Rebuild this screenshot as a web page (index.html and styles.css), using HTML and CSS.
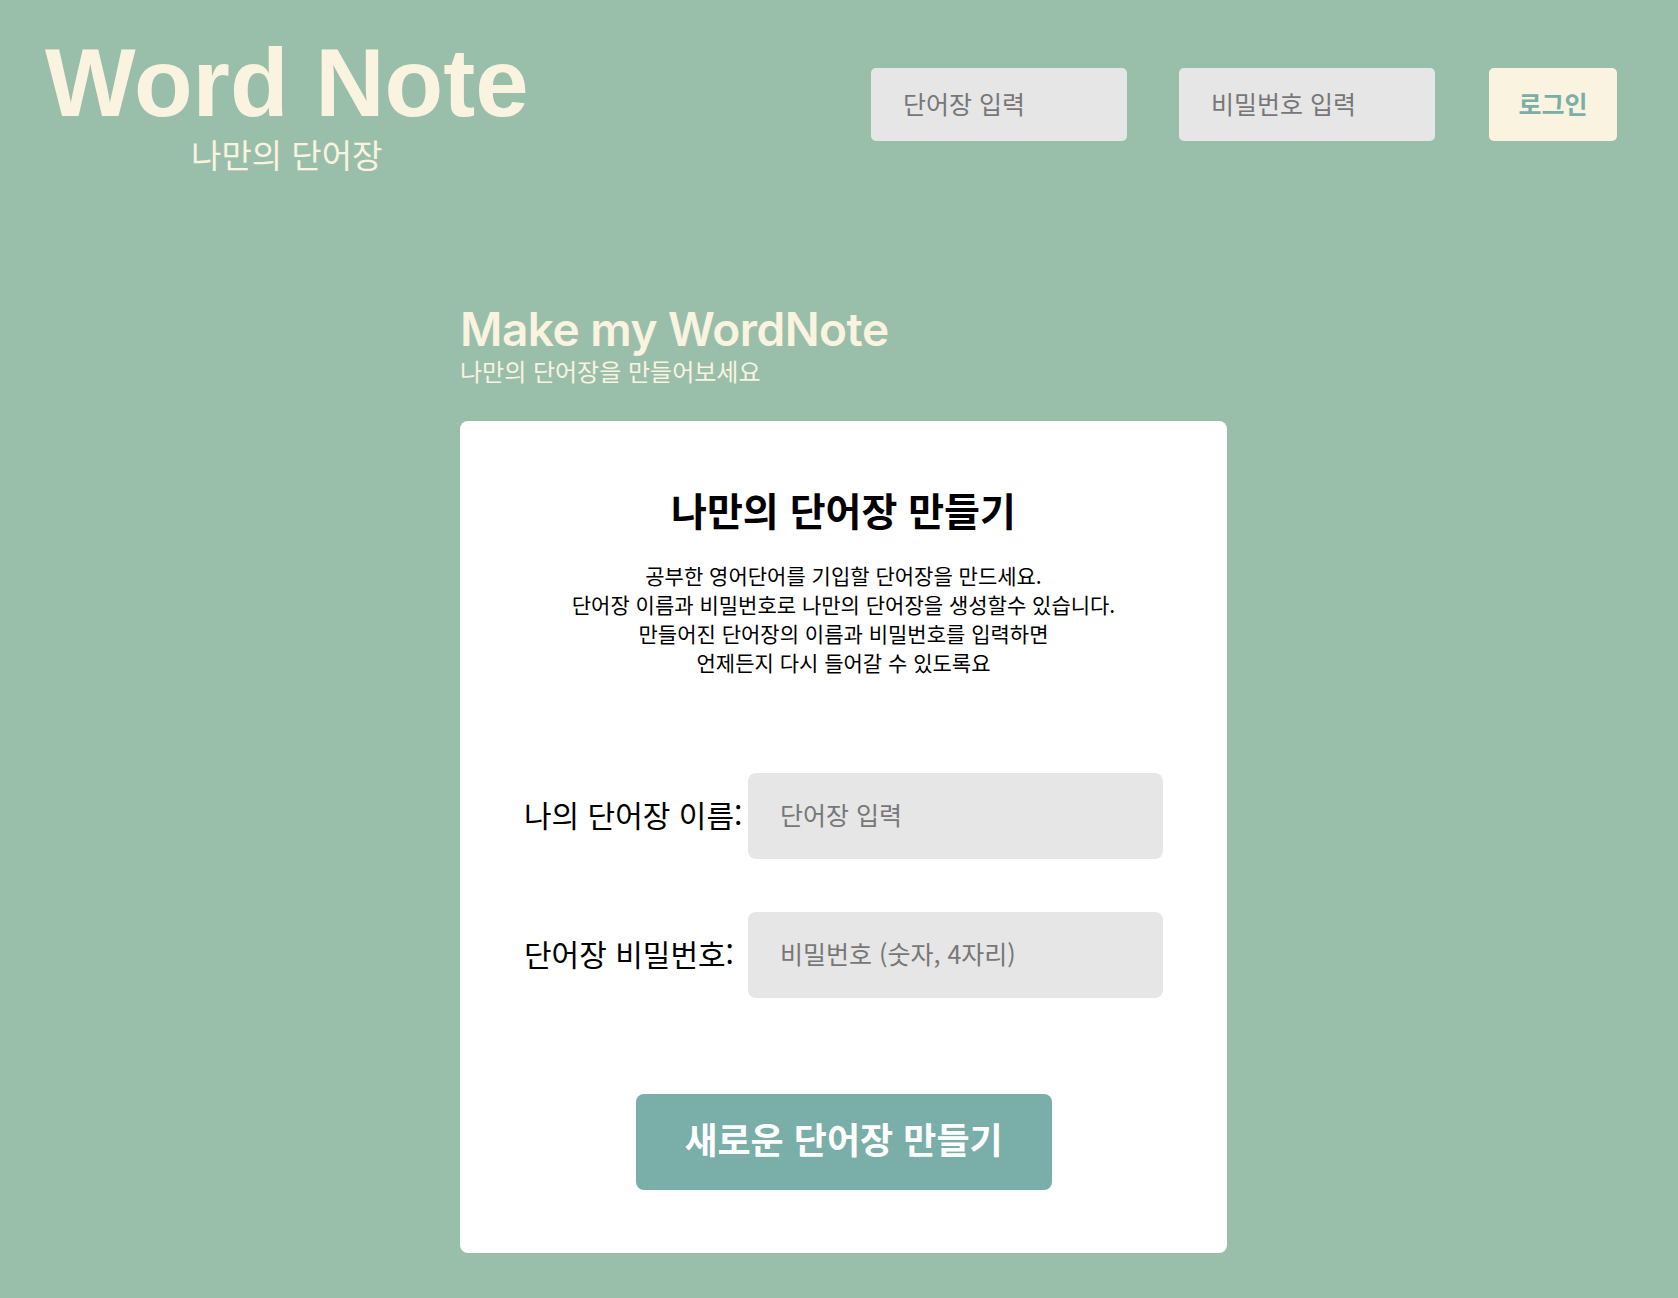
FILE: index.html
```html
<!DOCTYPE html>
<html lang="ko">
<head>
<meta charset="utf-8">
<title>Word Note</title>
<link rel="stylesheet" href="styles.css">
</head>
<body>
<header class="header">
  <div class="logo">
    <h1 class="logo-title">Word Note</h1>
    <p class="logo-sub">나만의 단어장</p>
  </div>
  <form class="login">
    <input class="login-input" type="text" placeholder="단어장 입력">
    <input class="login-input" type="password" placeholder="비밀번호 입력">
    <button class="login-btn" type="button">로그인</button>
  </form>
</header>
<main class="main">
  <section class="make">
    <h2 class="make-title">Make my WordNote</h2>
    <p class="make-sub">나만의 단어장을 만들어보세요</p>
    <div class="card">
      <h3 class="card-title">나만의 단어장 만들기</h3>
      <p class="card-desc">공부한 영어단어를 기입할 단어장을 만드세요.<br>단어장 이름과 비밀번호로 나만의 단어장을 생성할수 있습니다.<br>만들어진 단어장의 이름과 비밀번호를 입력하면<br>언제든지 다시 들어갈 수 있도록요</p>
      <div class="form">
        <label class="form-label" for="name">나의 단어장 이름:</label>
        <input class="form-input" id="name" type="text" placeholder="단어장 입력">
        <label class="form-label" for="pw">단어장 비밀번호:</label>
        <input class="form-input" id="pw" type="password" placeholder="비밀번호 (숫자, 4자리)">
      </div>
      <div class="actions">
        <button class="create-btn" type="button">새로운 단어장 만들기</button>
      </div>
    </div>
  </section>
</main>
</body>
</html>
```
FILE: styles.css
```css
* { box-sizing: border-box; }
html, body { margin: 0; padding: 0; }
body {
  background: #99bfaa;
  font-family: "Noto Sans CJK KR", "Noto Sans", sans-serif;
  min-height: 1298px;
}
.header {
  display: flex;
  justify-content: space-between;
  align-items: flex-start;
  padding: 35px 61px 0 45px;
}
.logo {
  display: flex;
  flex-direction: column;
  align-items: center;
}
.logo-title {
  margin: 0;
  font-family: "Liberation Sans", Arial, sans-serif;
  font-weight: 700;
  font-size: 96px;
  line-height: 96px;
  color: #faf3e0;
}
.logo-sub {
  margin: 4px 0 0;
  font-size: 33px;
  line-height: 39px;
  color: #faf3e0;
}
.login {
  display: flex;
  gap: 52px;
  margin-top: 33px;
}
.login-input {
  width: 256px;
  height: 73px;
  border: none;
  border-radius: 5px;
  background: #e6e6e6;
  padding: 0 32px 4px;
  font-family: "Noto Sans CJK KR", sans-serif;
  font-size: 25px;
  outline: none;
}
.login-input::placeholder, .form-input::placeholder { color: #777; }
.login-btn {
  width: 128px;
  height: 73px;
  margin-left: 2px;
  border: none;
  border-radius: 5px;
  background: #faf3e0;
  color: #7aaea8;
  font-family: "Noto Sans CJK KR", sans-serif;
  font-weight: 700;
  font-size: 25px;
  padding: 0 0 4px;
}
.main {
  display: flex;
  justify-content: center;
  padding: 0 0 46px 9px;
}
.make {
  width: 767px;
  margin-top: 127px;
}
.make-title {
  margin: 0;
  font-family: Inter, "Noto Sans", sans-serif;
  font-weight: 600;
  font-size: 46px;
  line-height: 56px;
  color: #faf3e0;
  letter-spacing: -0.5px;
}
.make-sub {
  margin: 0;
  font-size: 24px;
  line-height: 28px;
  color: #faf3e0;
}
.card {
  margin-top: 36px;
  background: #fff;
  border-radius: 8px;
  padding: 64px 64px 63px;
}
.card-title {
  margin: 0;
  text-align: center;
  font-size: 39px;
  font-weight: 700;
  line-height: 48px;
  color: #000;
}
.card-desc {
  margin: 28px 0 0;
  text-align: center;
  font-size: 21px;
  line-height: 29px;
  color: #000;
}
.form {
  display: grid;
  grid-template-columns: 224px 1fr;
  row-gap: 53px;
  align-items: center;
  margin-top: 96px;
}
.form-label {
  font-size: 30px;
  color: #000;
  padding-bottom: 4px;
}
.form-input {
  height: 86px;
  border: none;
  border-radius: 8px;
  background: #e6e6e6;
  padding: 0 32px 4px;
  font-family: "Noto Sans CJK KR", sans-serif;
  font-size: 25px;
  outline: none;
}
.actions {
  display: flex;
  justify-content: center;
  margin-top: 96px;
}
.create-btn {
  width: 416px;
  height: 96px;
  border: none;
  border-radius: 8px;
  background: #7aaea8;
  color: #fff;
  font-family: "Noto Sans CJK KR", sans-serif;
  font-weight: 700;
  font-size: 36px;
  padding: 0 0 9px;
}
```
